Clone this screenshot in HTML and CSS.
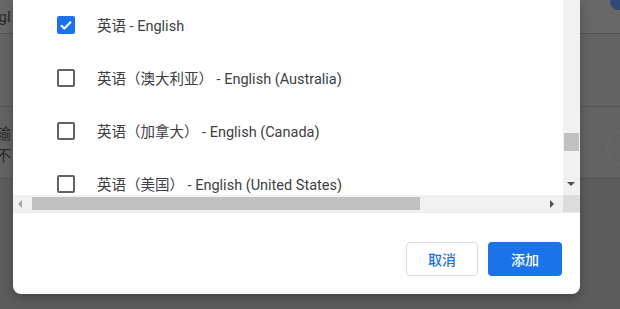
FILE: index.html
```html
<!DOCTYPE html>
<html lang="zh-CN">
<head>
    <meta charset="UTF-8">
    <meta name="viewport" content="width=device-width, initial-scale=1.0">
    <title>添加语言</title>
    <link rel="stylesheet" href="styles.css">
</head>
<body>
    <div class="page">
        <div class="band top"><span class="crumb">ogl</span></div>
        <div class="band mid"></div>
        <div class="band card">
            <div class="card-text">输<br>不</div>
            <div class="toggle"></div>
        </div>
        <div class="band rest"></div>
        <div class="avatar"></div>
    </div>

    <div class="dialog">
        <div class="list-wrap">
            <div class="list">
                <div class="row">
                    <span class="box checked">
                        <svg viewBox="0 0 18 18" width="18" height="18"><path d="M4 9.2l3.3 3.3L14 5.8" fill="none" stroke="#fff" stroke-width="2"/></svg>
                    </span>
                    <span class="label">英语 - English</span>
                </div>
                <div class="row">
                    <span class="box"></span>
                    <span class="label">英语（澳大利亚） - English (Australia)</span>
                </div>
                <div class="row">
                    <span class="box"></span>
                    <span class="label">英语（加拿大） - English (Canada)</span>
                </div>
                <div class="row">
                    <span class="box"></span>
                    <span class="label">英语（美国） - English (United States)</span>
                </div>
            </div>
            <div class="vbar">
                <div class="vthumb"></div>
                <div class="arrow down"></div>
            </div>
        </div>
        <div class="hbar">
            <div class="arrow left"></div>
            <div class="hthumb"></div>
            <div class="arrow right"></div>
            <div class="corner"></div>
        </div>
        <div class="footer">
            <button class="btn cancel">取消</button>
            <button class="btn add">添加</button>
        </div>
    </div>
</body>
</html>
```

FILE: styles.css
```css
*{
    margin: 0;
    padding: 0;
    box-sizing: border-box;
}
body{
    width: 620px;
    height: 309px;
    overflow: hidden;
    background-color: #606060;
    font-family: Roboto, 'Noto Sans CJK SC', sans-serif;
    position: relative;
}
.page{
    height: 309px;
    display: flex;
    flex-direction: column;
}
.band{
    border-bottom: 1px solid #545454;
}
.band.top{
    height: 34px;
    background: #676767;
}
.crumb{
    display: block;
    margin-left: -10px;
    margin-top: 8px;
    font-size: 15px;
    color: #2a2a2a;
}
.band.mid{
    height: 73px;
    background: #636363;
}
.band.card{
    height: 72px;
    background: #626262;
    position: relative;
}
.card-text{
    padding-top: 15px;
    margin-left: -4px;
    font-size: 15px;
    line-height: 22px;
    color: #2a2a2a;
    font-family: 'Noto Sans CJK SC', sans-serif;
}
.toggle{
    position: absolute;
    right: -20px;
    top: 24px;
    width: 34px;
    height: 34px;
    border-radius: 50%;
    border: 1px solid #6c6c6c;
}
.band.rest{
    flex: 1;
    background: #5c5c5c;
    border-bottom: none;
}
.avatar{
    position: absolute;
    right: -6px;
    top: -6px;
    width: 16px;
    height: 16px;
    border-radius: 50%;
    background: #2f4a78;
}
.dialog{
    position: absolute;
    left: 13px;
    top: 0;
    width: 567px;
    height: 294px;
    background: white;
    border-radius: 0 0 8px 8px;
    overflow: hidden;
    display: flex;
    flex-direction: column;
    box-shadow: 0 4px 10px rgba(0,0,0,0.25);
}
.list-wrap{
    display: flex;
    height: 195px;
}
.list{
    flex: 1;
    overflow: hidden;
    margin-top: -2px;
}
.row{
    height: 53px;
    display: flex;
    align-items: center;
    padding-left: 44px;
    gap: 22px;
}
.box{
    width: 18px;
    height: 18px;
    border: 2px solid #5f6368;
    border-radius: 2px;
    flex-shrink: 0;
    display: flex;
}
.box.checked{
    background: #1a73e8;
    border-color: #1a73e8;
}
.box.checked svg{
    margin: -2px;
}
.label{
    font-size: 14.5px;
    color: #3c4043;
    white-space: nowrap;
}
.vbar{
    width: 17px;
    background: #f1f1f1;
    position: relative;
}
.vthumb{
    position: absolute;
    left: 1px;
    right: 1px;
    top: 133px;
    height: 18px;
    background: #c1c1c1;
}
.arrow{
    position: absolute;
    width: 0;
    height: 0;
}
.arrow.down{
    left: 4px;
    top: 182px;
    border-left: 4px solid transparent;
    border-right: 4px solid transparent;
    border-top: 4px solid #505050;
}
.hbar{
    height: 18px;
    background: #f1f1f1;
    position: relative;
    border-bottom: 1px solid #ececec;
}
.hthumb{
    position: absolute;
    left: 19px;
    top: 2px;
    width: 388px;
    height: 13px;
    background: #c1c1c1;
}
.arrow.left{
    left: 5px;
    top: 5px;
    border-top: 4px solid transparent;
    border-bottom: 4px solid transparent;
    border-right: 4px solid #a3a3a3;
}
.arrow.right{
    left: 537px;
    top: 5px;
    border-top: 4px solid transparent;
    border-bottom: 4px solid transparent;
    border-left: 4px solid #505050;
}
.corner{
    position: absolute;
    right: 0;
    top: 0;
    width: 17px;
    height: 17px;
    background: #dcdcdc;
}
.footer{
    display: flex;
    justify-content: flex-end;
    gap: 10px;
    padding: 29px 18px 0 0;
}
.btn{
    height: 34px;
    border-radius: 4px;
    font-size: 14px;
    font-weight: 500;
    font-family: 'Noto Sans CJK SC', sans-serif;
    cursor: pointer;
}
.btn.cancel{
    width: 72px;
    background: white;
    border: 1px solid #dadce0;
    color: #1a73e8;
}
.btn.add{
    width: 74px;
    background: #1a73e8;
    border: none;
    color: white;
}
```
